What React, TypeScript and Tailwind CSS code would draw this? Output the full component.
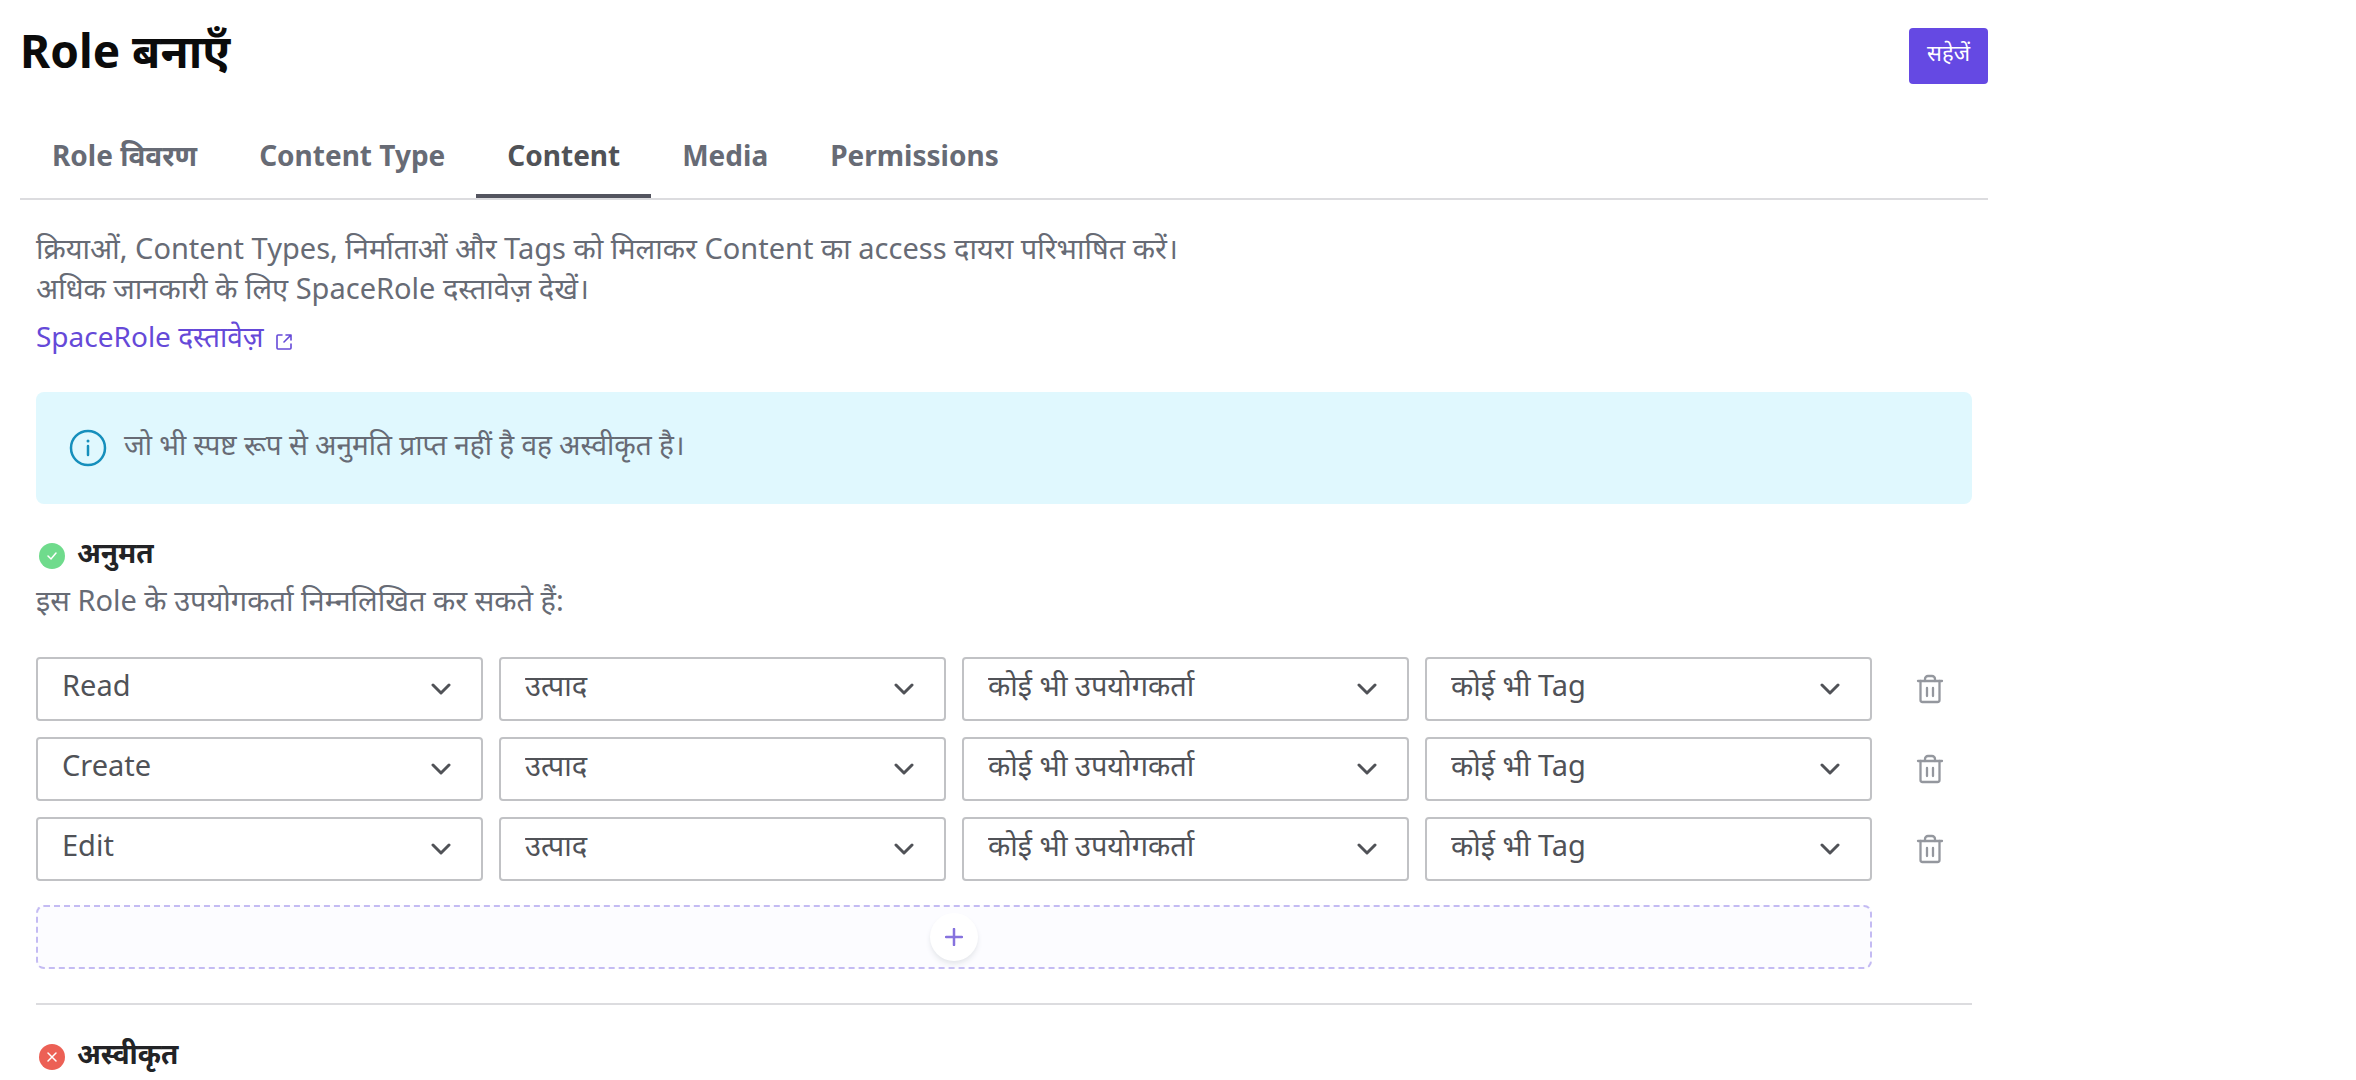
import { useState } from 'react';

interface Rule {
  id: number;
  action: string;
  contentType: string;
  creator: string;
  tag: string;
}

const TABS = ['Role विवरण', 'Content Type', 'Content', 'Media', 'Permissions'];

const ACTIONS = ['Read', 'Create', 'Edit'];
const CONTENT_TYPES = ['उत्पाद'];
const CREATORS = ['कोई भी उपयोगकर्ता'];
const TAGS = ['कोई भी Tag'];

function Dropdown({ label, value, options, onChange }: {
  label: string;
  value: string;
  options: string[];
  onChange: (value: string) => void;
}) {
  return (
    <div className="relative min-w-0">
      <select
        aria-label={label}
        value={value}
        onChange={(e) => onChange(e.target.value)}
        className="block w-full h-16 pl-6 pr-16 pb-2 appearance-none rounded-sm border-2 border-[#c1c2c5] bg-white text-[29px] text-[#505257] outline-none focus:border-[#6549e3]"
      >
        {options.map((option) => (
          <option key={option}>{option}</option>
        ))}
      </select>
      <svg className="absolute right-8 top-6 w-5 h-4 pointer-events-none" viewBox="0 0 20 16" fill="none" stroke="#505257" strokeWidth="3" strokeLinecap="round" strokeLinejoin="round">
        <path d="M2 4 10 12 18 4" />
      </svg>
    </div>
  );
}

function TrashIcon() {
  return (
    <svg className="w-7 h-8" viewBox="0 0 28 32" fill="none" stroke="#94979e" strokeWidth="2.3" strokeLinecap="round" strokeLinejoin="round">
      <path d="M2 8H26" />
      <path d="M9 8V6a3 3 0 0 1 3-3h4a3 3 0 0 1 3 3v2" />
      <path d="M4.5 8v19a2 2 0 0 0 2 2h15a2 2 0 0 0 2-2V8" />
      <path d="M11 15v8M17 15v8" />
    </svg>
  );
}

export default function App() {
  const [activeTab, setActiveTab] = useState('Content');
  const [rules, setRules] = useState<Rule[]>(
    ACTIONS.map((action, i) => ({
      id: i,
      action,
      contentType: CONTENT_TYPES[0],
      creator: CREATORS[0],
      tag: TAGS[0],
    }))
  );

  const updateRule = (id: number, changes: Partial<Rule>) => {
    setRules(rules.map((rule) => (rule.id === id ? { ...rule, ...changes } : rule)));
  };

  const addRule = () => {
    setRules([
      ...rules,
      { id: Date.now(), action: ACTIONS[0], contentType: CONTENT_TYPES[0], creator: CREATORS[0], tag: TAGS[0] },
    ]);
  };

  return (
    <div className="min-h-screen bg-white font-['Noto_Sans',sans-serif] text-[29px] leading-10 text-[#676b75]">
      <div className="max-w-[2008px] px-5 pt-7">
        <header className="flex items-start justify-between">
          <h1 className="text-[46px] leading-11 font-bold text-[#0b0b0b]">Role बनाएँ</h1>
          <button className="h-14 px-[18px] pb-2 rounded-sm bg-[#6549e3] text-[22px] text-white">सहेजें</button>
        </header>

        <nav role="tablist" className="mt-10 flex border-b-2 border-[#dcdcdf] pl-px text-[28px]">
          {TABS.map((tab) => (
            <button
              key={tab}
              role="tab"
              aria-selected={activeTab === tab}
              onClick={() => setActiveTab(tab)}
              className={
                activeTab === tab
                  ? 'h-[74px] px-[31px] pb-2 border-b-4 border-[#53545f] font-bold text-[#505257]'
                  : 'h-[74px] px-[31px] pb-2 border-b-4 border-transparent font-bold'
              }
            >
              {tab}
            </button>
          ))}
        </nav>

        <main className="px-4 pt-7">
          <p>क्रियाओं, Content Types, निर्माताओं और Tags को मिलाकर Content का access दायरा परिभाषित करें।</p>
          <p>अधिक जानकारी के लिए SpaceRole दस्तावेज़ देखें।</p>
          <a href="#docs" className="mt-2 flex w-fit items-center gap-3 text-[28px] text-[#6549d8]">
            SpaceRole दस्तावेज़
            <svg className="mt-3 w-4 h-4" viewBox="0 0 16 16" fill="none" stroke="currentColor" strokeWidth="1.6" strokeLinecap="round" strokeLinejoin="round">
              <path d="M6 1H2a1 1 0 0 0-1 1v12a1 1 0 0 0 1 1h12a1 1 0 0 0 1-1v-4M10 1h5v5M15 1 8 8" />
            </svg>
          </a>

          <div className="mt-9 flex h-28 items-center gap-4 rounded-lg bg-[#e0f8fe] px-8">
            <svg className="w-10 h-10 shrink-0" viewBox="0 0 40 40" fill="none" stroke="#168fbc" strokeWidth="2.5" strokeLinecap="round">
              <circle cx="20" cy="20" r="17" />
              <path d="M20 18v9" />
              <circle cx="20" cy="13" r="1.5" fill="#168fbc" stroke="none" />
            </svg>
            <p className="pb-2 text-[28px]">जो भी स्पष्ट रूप से अनुमति प्राप्त नहीं है वह अस्वीकृत है।</p>
          </div>

          <section>
            <h2 className="mt-7 flex items-center gap-3 pl-[3px] text-[28px] font-bold text-[#222326]">
              <svg className="mt-2 w-[26px] h-[26px]" viewBox="0 0 26 26" fill="none">
                <circle cx="13" cy="13" r="13" fill="#6fdb8c" />
                <path d="M9 13l3 3 5-6" stroke="white" strokeWidth="1.5" strokeLinecap="round" />
              </svg>
              अनुमत
            </h2>
            <p className="mt-2">इस Role के उपयोगकर्ता निम्नलिखित कर सकते हैं:</p>

            <div className="mt-[37px] flex flex-col gap-4">
              {rules.map((rule) => (
                <div key={rule.id} className="flex items-center gap-11">
                  <div className="grid flex-1 grid-cols-4 gap-4">
                    <Dropdown label="Action" value={rule.action} options={ACTIONS} onChange={(action) => updateRule(rule.id, { action })} />
                    <Dropdown label="Content Type" value={rule.contentType} options={CONTENT_TYPES} onChange={(contentType) => updateRule(rule.id, { contentType })} />
                    <Dropdown label="Creator" value={rule.creator} options={CREATORS} onChange={(creator) => updateRule(rule.id, { creator })} />
                    <Dropdown label="Tag" value={rule.tag} options={TAGS} onChange={(tag) => updateRule(rule.id, { tag })} />
                  </div>
                  <button
                    aria-label="Delete"
                    onClick={() => setRules(rules.filter((r) => r.id !== rule.id))}
                    className="mr-7"
                  >
                    <TrashIcon />
                  </button>
                </div>
              ))}
            </div>

            <button
              aria-label="Add rule"
              onClick={addRule}
              className="mt-6 flex h-16 w-[calc(100%-100px)] items-center justify-center rounded-lg border-2 border-dashed border-[#c4bbf3] bg-[#fcfcff]"
            >
              <span className="flex w-12 h-12 items-center justify-center rounded-full bg-white shadow-md shadow-gray-200">
                <svg className="w-[18px] h-[18px]" viewBox="0 0 18 18" fill="none" stroke="#8672de" strokeWidth="2.5" strokeLinecap="round">
                  <path d="M9 1v16M1 9h16" />
                </svg>
              </span>
            </button>
          </section>

          <section className="mt-[34px] border-t-2 border-[#dcdcdf] pt-7">
            <h2 className="flex items-center gap-3 pl-[3px] text-[28px] font-bold text-[#222326]">
              <svg className="mt-2 w-[26px] h-[26px]" viewBox="0 0 26 26" fill="none">
                <circle cx="13" cy="13" r="13" fill="#ec6055" />
                <path d="M9 9l8 8M17 9l-8 8" stroke="white" strokeWidth="1.5" strokeLinecap="round" />
              </svg>
              अस्वीकृत
            </h2>
          </section>
        </main>
      </div>
    </div>
  );
}
